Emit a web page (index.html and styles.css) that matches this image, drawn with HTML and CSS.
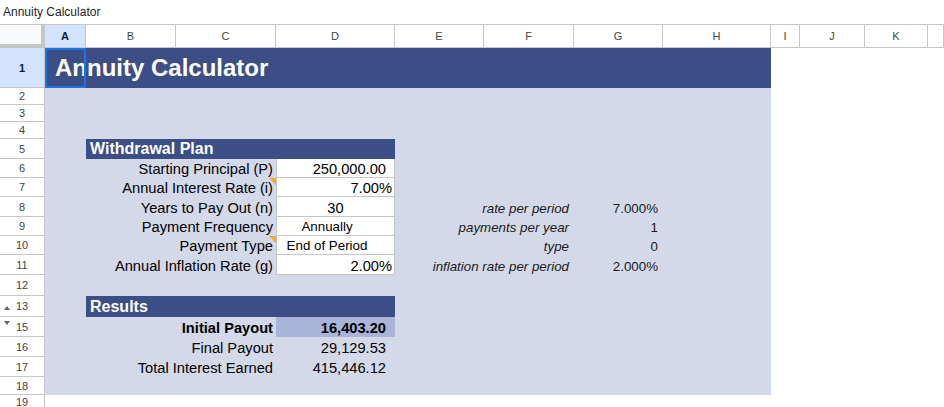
FILE: index.html
```html
<!DOCTYPE html>
<html lang="en">
<head>
    <meta charset="UTF-8">
    <title>Annuity Calculator</title>
    <link rel="stylesheet" href="styles.css">
</head>
<body>
    <div class="titlebar">Annuity Calculator</div>

    <div class="sheet">
        <!-- column headers -->
        <div class="row row-head">
            <div class="corner"></div>
            <div class="ch sel">A</div>
            <div class="ch">B</div>
            <div class="ch">C</div>
            <div class="ch">D</div>
            <div class="ch">E</div>
            <div class="ch">F</div>
            <div class="ch">G</div>
            <div class="ch">H</div>
            <div class="ch">I</div>
            <div class="ch">J</div>
            <div class="ch">K</div>
            <div class="ch"></div>
        </div>

        <div class="row h40">
            <div class="rh sel"><span class="num">1</span></div>
            <div class="c title s8">Annuity Calculator</div>
        </div>
        <div class="row h17">
            <div class="rh"><span class="num">2</span></div>
            <div class="c lav s8"></div>
        </div>
        <div class="row h17">
            <div class="rh"><span class="num">3</span></div>
            <div class="c lav s8"></div>
        </div>
        <div class="row h17">
            <div class="rh"><span class="num">4</span></div>
            <div class="c lav s8"></div>
        </div>

        <!-- Withdrawal plan -->
        <div class="row h20">
            <div class="rh"><span class="num">5</span></div>
            <div class="c lav"></div>
            <div class="c band s3">Withdrawal Plan</div>
            <div class="c lav s4"></div>
        </div>
        <div class="row h19">
            <div class="rh"><span class="num">6</span></div>
            <div class="c lav"></div>
            <div class="c lav label s2">Starting Principal (P)</div>
            <div class="c input acct">250,000.00</div>
            <div class="c lav s4"></div>
        </div>
        <div class="row h19">
            <div class="rh"><span class="num">7</span></div>
            <div class="c lav"></div>
            <div class="c lav label note s2">Annual Interest Rate (i)</div>
            <div class="c input pct">7.00%</div>
            <div class="c lav s4"></div>
        </div>
        <div class="row h20">
            <div class="rh"><span class="num">8</span></div>
            <div class="c lav"></div>
            <div class="c lav label s2">Years to Pay Out (n)</div>
            <div class="c input mid">30</div>
            <div class="c lav calc-label s2">rate per period</div>
            <div class="c lav calc-val">7.000%</div>
            <div class="c lav"></div>
        </div>
        <div class="row h19">
            <div class="rh"><span class="num">9</span></div>
            <div class="c lav"></div>
            <div class="c lav label s2">Payment Frequency</div>
            <div class="c input choice">Annually</div>
            <div class="c lav calc-label s2">payments per year</div>
            <div class="c lav calc-val">1</div>
            <div class="c lav"></div>
        </div>
        <div class="row h19">
            <div class="rh"><span class="num">10</span></div>
            <div class="c lav"></div>
            <div class="c lav label note s2">Payment Type</div>
            <div class="c input choice">End of Period</div>
            <div class="c lav calc-label s2">type</div>
            <div class="c lav calc-val">0</div>
            <div class="c lav"></div>
        </div>
        <div class="row h20">
            <div class="rh"><span class="num">11</span></div>
            <div class="c lav"></div>
            <div class="c lav label s2">Annual Inflation Rate (g)</div>
            <div class="c input pct">2.00%</div>
            <div class="c lav calc-label s2">inflation rate per period</div>
            <div class="c lav calc-val">2.000%</div>
            <div class="c lav"></div>
        </div>
        <div class="row h21">
            <div class="rh"><span class="num">12</span></div>
            <div class="c lav s8"></div>
        </div>

        <!-- Results -->
        <div class="row h21">
            <div class="rh"><span class="grp up"></span><span class="num">13</span></div>
            <div class="c lav"></div>
            <div class="c band s3">Results</div>
            <div class="c lav s4"></div>
        </div>
        <div class="row h20">
            <div class="rh"><span class="grp down"></span><span class="num">15</span></div>
            <div class="c lav"></div>
            <div class="c lav label bold s2">Initial Payout</div>
            <div class="c hl acct bold">16,403.20</div>
            <div class="c lav s4"></div>
        </div>
        <div class="row h20">
            <div class="rh"><span class="num">16</span></div>
            <div class="c lav"></div>
            <div class="c lav label s2">Final Payout</div>
            <div class="c lav acct">29,129.53</div>
            <div class="c lav s4"></div>
        </div>
        <div class="row h20">
            <div class="rh"><span class="num">17</span></div>
            <div class="c lav"></div>
            <div class="c lav label s2">Total Interest Earned</div>
            <div class="c lav acct">415,446.12</div>
            <div class="c lav s4"></div>
        </div>
        <div class="row h18">
            <div class="rh"><span class="num">18</span></div>
            <div class="c lav s8"></div>
        </div>
        <div class="row h12">
            <div class="rh last"><span class="num">19</span></div>
        </div>
    </div>
</body>
</html>
```
FILE: styles.css
```css
:root {
    --navy: #3c4e86;
    --lavender: #d4d9ea;
    --highlight: #a9b4d9;
    --grid-line: #c7c7c7;
    --input-line: #c6c6c6;
    --select: #1a73e8;
    --cols: 45px 41px 90px 100px 119px 89px 90px 89px 108px 29px 65px 63px 1fr;
}

*, *::before, *::after {
    box-sizing: border-box;
    margin: 0;
    padding: 0;
}

body {
    font-family: 'Liberation Sans', Arial, sans-serif;
    color: #000;
    background-color: #fff;
    width: 944px;
    height: 407px;
    overflow: hidden;
}

.titlebar {
    height: 24px;
    padding: 0 3px;
    display: flex;
    align-items: center;
    font-size: 12px;
    color: #1f1f1f;
}

.row {
    display: grid;
    grid-template-columns: var(--cols);
}

.row-head { height: 24px; }
.h12 { height: 12px; }
.h17 { height: 17px; }
.h18 { height: 18px; }
.h19 { height: 19px; }
.h20 { height: 20px; }
.h21 { height: 21px; }
.h40 { height: 40px; }

/* headers */
.corner {
    background-color: #f8f9fa;
    border-top: 1px solid var(--grid-line);
    border-right: 4px solid #c4c7c5;
    border-bottom: 4px solid #c4c7c5;
}

.ch {
    display: flex;
    align-items: center;
    justify-content: center;
    border-top: 1px solid var(--grid-line);
    border-right: 1px solid var(--grid-line);
    border-bottom: 1px solid var(--grid-line);
    font-size: 11px;
    color: #444;
}

.rh {
    display: grid;
    grid-template-columns: 14px 1fr 14px;
    align-items: center;
    border-right: 1px solid var(--grid-line);
    border-bottom: 1px solid var(--grid-line);
    font-size: 11px;
    color: #444;
}

.rh.last {
    border-bottom: none;
    align-items: start;
    line-height: 12px;
    padding-top: 1px;
}

.rh .num {
    grid-column: 2;
    grid-row: 1;
    text-align: center;
}

.sel {
    background-color: #d3e3fd;
    color: #041e49;
    font-weight: bold;
}

.grp {
    grid-column: 1;
    grid-row: 1;
    justify-self: start;
    margin-left: 4px;
    width: 0;
    height: 0;
    border-left: 3px solid transparent;
    border-right: 3px solid transparent;
}

.grp.up {
    border-bottom: 4px solid #5f6368;
    margin-top: 3px;
}

.grp.down {
    align-self: start;
    border-top: 4px solid #5f6368;
    margin-top: 4px;
}

/* cells */
.c {
    display: flex;
    align-items: flex-end;
    padding: 0 3px 1px;
    white-space: nowrap;
    font-size: 14.67px;
    min-width: 0;
}

.s2 { grid-column: span 2; }
.s3 { grid-column: span 3; }
.s4 { grid-column: span 4; }
.s8 { grid-column: span 8; }

.lav {
    background-color: var(--lavender);
}

.title {
    position: relative;
    align-items: center;
    padding: 0 0 0 10px;
    background-color: var(--navy);
    color: #fff;
    font-size: 24px;
    font-weight: bold;
}

/* selected cell A1 */
.title::after {
    content: '';
    position: absolute;
    left: 0;
    top: 0;
    width: 41px;
    height: 100%;
    border: 2px solid var(--select);
}

.band {
    background-color: var(--navy);
    color: #fff;
    font-size: 16px;
    font-weight: bold;
    padding-left: 4px;
}

.label {
    justify-content: flex-end;
}

.note {
    position: relative;
}

.note::after {
    content: '';
    position: absolute;
    top: 0;
    right: 0;
    border-top: 7px solid #f4ab1a;
    border-left: 7px solid transparent;
}

.bold {
    font-weight: bold;
}

.input {
    background-color: #fff;
    box-shadow: inset 1px 0 var(--input-line), inset -1px 0 var(--input-line), inset 0 -1px var(--input-line);
}

.acct {
    justify-content: flex-end;
    padding-right: 9px;
}

.pct {
    justify-content: flex-end;
}

.mid {
    justify-content: center;
}

.choice {
    justify-content: center;
    padding-right: 20px;
    font-size: 13.33px;
    padding-bottom: 2px;
}

.hl {
    background-color: var(--highlight);
}

.calc-label {
    justify-content: flex-end;
    font-style: italic;
    font-size: 13.33px;
    padding-right: 5px;
    color: #1a1a1a;
}

.calc-val {
    justify-content: flex-end;
    font-size: 13.33px;
    padding-right: 5px;
    color: #1a1a1a;
}
```
